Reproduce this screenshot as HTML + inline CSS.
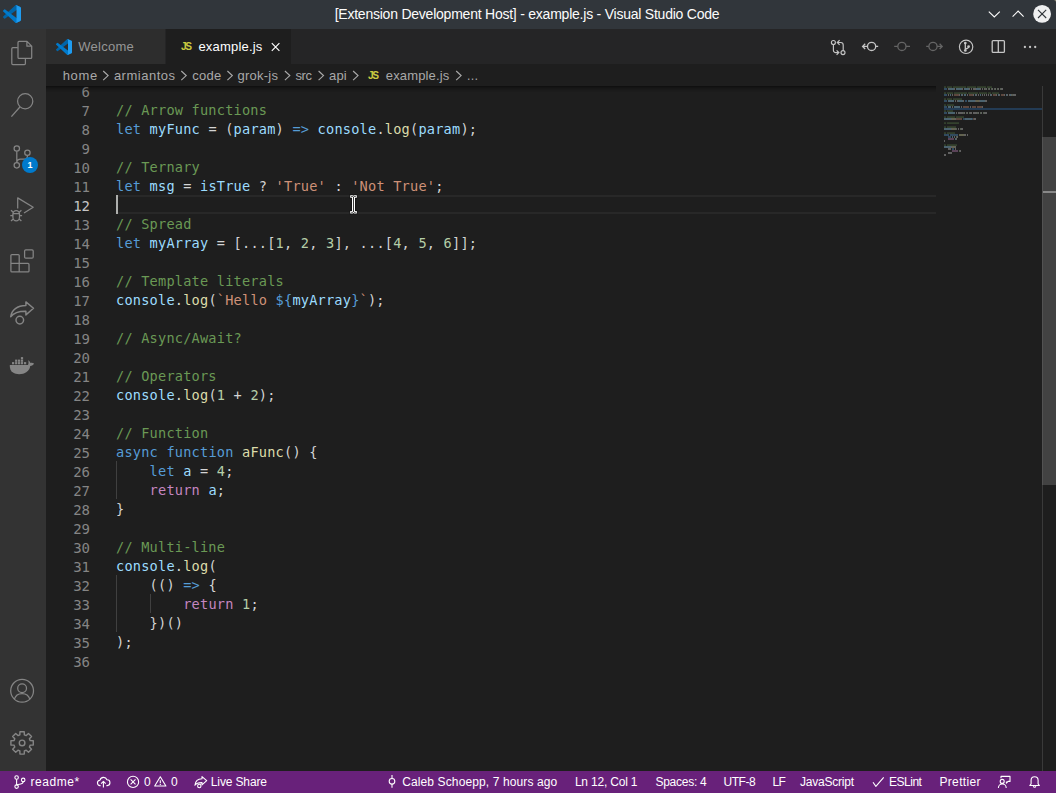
<!DOCTYPE html>
<html lang="en">
<head>
<meta charset="utf-8">
<title>[Extension Development Host] - example.js - Visual Studio Code</title>
<style>
*{box-sizing:border-box;margin:0;padding:0}
html,body{width:1056px;height:793px;overflow:hidden;background:#1e1e1e}
body{position:relative;font-family:"Liberation Sans","DejaVu Sans",sans-serif;font-size:13px;color:#ccc}
.abs{position:absolute}
#titlebar{position:absolute;left:0;top:0;width:1056px;height:29px;background:#31363b}
#titletext{position:absolute;left:-1px;top:0;width:1056px;height:29px;line-height:29px;text-align:center;color:#fcfcfc;font-size:14px;white-space:nowrap}
#activity{position:absolute;left:0;top:29px;width:46px;height:742px;background:#333333}
#tabs{position:absolute;left:46px;top:29px;width:1010px;height:35px;background:#252526}
.tab{position:absolute;top:0;height:35px;line-height:35px;white-space:nowrap;font-size:13px}
#tab1{left:0;width:119px;background:#2d2d2d;color:#969696}
#tab2{left:120px;width:125px;background:#1e1e1e;color:#ffffff}
#crumbs{position:absolute;left:46px;top:64px;width:1010px;height:22px;background:#1e1e1e;line-height:22px;color:#a9a9a9;font-size:13px;white-space:nowrap}
#crumbs span{position:absolute;top:1px}
#editor{position:absolute;left:46px;top:86px;width:1010px;height:685px;background:#1e1e1e;overflow:hidden}
#shadow{position:absolute;left:0;top:0;width:890px;height:6px;box-shadow:#000 0 6px 6px -6px inset}
.ln{position:absolute;left:0;width:44px;text-align:right;height:19px;line-height:19px;color:#858585;font-family:"DejaVu Sans Mono","Liberation Mono",monospace;font-size:14px}
.ln.cur{color:#c6c6c6}
.cl{position:absolute;left:70px;height:19px;line-height:19px;white-space:pre;color:#d4d4d4;font-family:"DejaVu Sans Mono","Liberation Mono",monospace;font-size:13.6px;letter-spacing:0.213px}
.c{color:#6a9955}.k{color:#569cd6}.v{color:#9cdcfe}.f{color:#dcdcaa}.s{color:#ce9178}.n{color:#b5cea8}.r{color:#c586c0}
#status{position:absolute;left:0;top:771px;width:1056px;height:22px;background:#68217a;color:#fff;font-size:12px;line-height:22px;white-space:nowrap}
#status span{position:absolute;top:0}
svg{position:absolute;overflow:visible}
.badge{position:absolute;left:22px;top:157px;width:16px;height:16px;line-height:16px;text-align:center;color:#fff;font-size:9px;font-weight:bold}
.js{position:absolute;color:#cbcb41;font-weight:bold;font-size:10.2px;letter-spacing:-1.3px}
</style>
</head>
<body>
<div id="titlebar"></div>
<div id="titletext" style="letter-spacing:-0.23px">[Extension Development Host] - example.js - Visual Studio Code</div>
<div id="activity"></div>
<div id="tabs">
  <div class="tab" id="tab1"><span class="abs" style="left:32.2px;letter-spacing:0.28px">Welcome</span></div>
  <div class="tab" id="tab2"><span class="js" style="left:15px;top:0">JS</span><span class="abs" style="left:32.4px;letter-spacing:0.20px">example.js</span></div>
</div>
<div id="crumbs">
  <span style="left:16.7px;letter-spacing:0.67px">home</span>
  <span style="left:67.9px;letter-spacing:0.50px">armiantos</span>
  <span style="left:146.2px;letter-spacing:0.28px">code</span>
  <span style="left:191.5px;letter-spacing:0.23px">grok-js</span>
  <span style="left:249.4px;letter-spacing:-0.41px">src</span>
  <span style="left:283.0px;letter-spacing:0.17px">api</span>
  <span style="left:339.8px;letter-spacing:0.15px">example.js</span>
  <span class="js" style="left:322px">JS</span>
  <span style="left:420.5px;font-size:12px">…</span>
</div>
<div id="editor">
<!--CODE-->
  <div class="ln" style="top:-3px">6</div>
  <div class="ln" style="top:16px">7</div>
  <div class="cl" style="top:15px"><span class="c">// Arrow functions</span></div>
  <div class="ln" style="top:35px">8</div>
  <div class="cl" style="top:34px"><span class="k">let</span> <span class="v">myFunc</span> = (<span class="v">param</span>) <span class="k">=&gt;</span> <span class="v">console</span>.<span class="f">log</span>(<span class="v">param</span>);</div>
  <div class="ln" style="top:54px">9</div>
  <div class="ln" style="top:73px">10</div>
  <div class="cl" style="top:72px"><span class="c">// Ternary</span></div>
  <div class="ln" style="top:92px">11</div>
  <div class="cl" style="top:91px"><span class="k">let</span> <span class="v">msg</span> = <span class="v">isTrue</span> ? <span class="s">'True'</span> : <span class="s">'Not True'</span>;</div>
  <div class="ln cur" style="top:111px">12</div>
  <div class="ln" style="top:130px">13</div>
  <div class="cl" style="top:129px"><span class="c">// Spread</span></div>
  <div class="ln" style="top:149px">14</div>
  <div class="cl" style="top:148px"><span class="k">let</span> <span class="v">myArray</span> = [...[<span class="n">1</span>, <span class="n">2</span>, <span class="n">3</span>], ...[<span class="n">4</span>, <span class="n">5</span>, <span class="n">6</span>]];</div>
  <div class="ln" style="top:168px">15</div>
  <div class="ln" style="top:187px">16</div>
  <div class="cl" style="top:186px"><span class="c">// Template literals</span></div>
  <div class="ln" style="top:206px">17</div>
  <div class="cl" style="top:205px"><span class="v">console</span>.<span class="f">log</span>(<span class="s">`Hello </span><span class="k">${</span><span class="v">myArray</span><span class="k">}</span><span class="s">`</span>);</div>
  <div class="ln" style="top:225px">18</div>
  <div class="ln" style="top:244px">19</div>
  <div class="cl" style="top:243px"><span class="c">// Async/Await?</span></div>
  <div class="ln" style="top:263px">20</div>
  <div class="ln" style="top:282px">21</div>
  <div class="cl" style="top:281px"><span class="c">// Operators</span></div>
  <div class="ln" style="top:301px">22</div>
  <div class="cl" style="top:300px"><span class="v">console</span>.<span class="f">log</span>(<span class="n">1</span> + <span class="n">2</span>);</div>
  <div class="ln" style="top:320px">23</div>
  <div class="ln" style="top:339px">24</div>
  <div class="cl" style="top:338px"><span class="c">// Function</span></div>
  <div class="ln" style="top:358px">25</div>
  <div class="cl" style="top:357px"><span class="k">async</span> <span class="k">function</span> <span class="f">aFunc</span>() {</div>
  <div class="ln" style="top:377px">26</div>
  <div class="cl" style="top:376px">    <span class="k">let</span> <span class="v">a</span> = <span class="n">4</span>;</div>
  <div class="ln" style="top:396px">27</div>
  <div class="cl" style="top:395px">    <span class="r">return</span> <span class="v">a</span>;</div>
  <div class="ln" style="top:415px">28</div>
  <div class="cl" style="top:414px">}</div>
  <div class="ln" style="top:434px">29</div>
  <div class="ln" style="top:453px">30</div>
  <div class="cl" style="top:452px"><span class="c">// Multi-line</span></div>
  <div class="ln" style="top:472px">31</div>
  <div class="cl" style="top:471px"><span class="v">console</span>.<span class="f">log</span>(</div>
  <div class="ln" style="top:491px">32</div>
  <div class="cl" style="top:490px">    (() <span class="k">=&gt;</span> {</div>
  <div class="ln" style="top:510px">33</div>
  <div class="cl" style="top:509px">        <span class="r">return</span> <span class="n">1</span>;</div>
  <div class="ln" style="top:529px">34</div>
  <div class="cl" style="top:528px">    })()</div>
  <div class="ln" style="top:548px">35</div>
  <div class="cl" style="top:547px">);</div>
  <div class="ln" style="top:567px">36</div>
<!--/CODE-->
  <div id="shadow"></div>
</div>
<div id="status">
  <span style="left:30.5px;letter-spacing:0.57px">readme*</span>
  <span style="left:143.9px;letter-spacing:0.00px">0</span>
  <span style="left:171.0px;letter-spacing:0.00px">0</span>
  <span style="left:210.8px;letter-spacing:-0.13px">Live Share</span>
  <span style="left:402.2px;letter-spacing:0.12px">Caleb Schoepp, 7 hours ago</span>
  <span style="left:574.9px;letter-spacing:-0.19px">Ln 12, Col 1</span>
  <span style="left:655.4px;letter-spacing:-0.25px">Spaces: 4</span>
  <span style="left:723.5px;letter-spacing:-0.48px">UTF-8</span>
  <span style="left:772.6px;letter-spacing:-0.70px">LF</span>
  <span style="left:799.9px;letter-spacing:-0.20px">JavaScript</span>
  <span style="left:889.0px;letter-spacing:-0.48px">ESLint</span>
  <span style="left:939.4px;letter-spacing:0.36px">Prettier</span>
</div>
<!--SVG-->
<svg id="ov" width="1056" height="793" viewBox="0 0 1056 793" style="left:0;top:0;pointer-events:none">
<g transform="translate(3 5) scale(0.18)">
<path fill="#0065a9" d="M96.46 10.8L75.86.88a6.23 6.23 0 0 0-7.1 1.2L1.3 63.55a4.17 4.17 0 0 0 0 6.16l5.5 5a4.17 4.17 0 0 0 5.33.24l81.22-61.6c2.72-2.07 6.64-.13 6.64 3.3v-.24a6.25 6.25 0 0 0-3.54-5.63z"/>
<path fill="#007acc" d="M96.46 89.2l-20.6 9.92a6.23 6.23 0 0 1-7.1-1.2L1.3 36.45a4.17 4.17 0 0 1 0-6.16l5.5-5a4.17 4.17 0 0 1 5.33-.24l81.22 61.6c2.72 2.07 6.64.13 6.64-3.3v.24a6.25 6.25 0 0 1-3.54 5.63z"/>
<path fill="#1f9cf0" d="M75.86 99.13a6.23 6.23 0 0 1-7.1-1.2c2.3 2.3 6.25.67 6.25-2.6V4.67c0-3.26-3.95-4.9-6.25-2.6a6.23 6.23 0 0 1 7.1-1.2l20.6 9.9A6.25 6.25 0 0 1 100 16.4v67.2a6.25 6.25 0 0 1-3.54 5.63z"/>
</g>
<g transform="translate(56 39) scale(0.16)">
<path fill="#0065a9" d="M96.46 10.8L75.86.88a6.23 6.23 0 0 0-7.1 1.2L1.3 63.55a4.17 4.17 0 0 0 0 6.16l5.5 5a4.17 4.17 0 0 0 5.33.24l81.22-61.6c2.72-2.07 6.64-.13 6.64 3.3v-.24a6.25 6.25 0 0 0-3.54-5.63z"/>
<path fill="#007acc" d="M96.46 89.2l-20.6 9.92a6.23 6.23 0 0 1-7.1-1.2L1.3 36.45a4.17 4.17 0 0 1 0-6.16l5.5-5a4.17 4.17 0 0 1 5.33-.24l81.22 61.6c2.72 2.07 6.64.13 6.64-3.3v.24a6.25 6.25 0 0 1-3.54 5.63z"/>
<path fill="#1f9cf0" d="M75.86 99.13a6.23 6.23 0 0 1-7.1-1.2c2.3 2.3 6.25.67 6.25-2.6V4.67c0-3.26-3.95-4.9-6.25-2.6a6.23 6.23 0 0 1 7.1-1.2l20.6 9.9A6.25 6.25 0 0 1 100 16.4v67.2a6.25 6.25 0 0 1-3.54 5.63z"/>
</g>
<path d="M988.8 11.6 L994.3 17 L999.8 11.6" fill="none" stroke="#fcfcfc" stroke-width="1.1"/>
<path d="M1012.6 16.6 L1018.1 11.1 L1023.6 16.6" fill="none" stroke="#fcfcfc" stroke-width="1.1"/>
<circle cx="1042.1" cy="13.9" r="8.9" fill="#eff0f1"/>
<path d="M1038 9.8 L1046.2 18 M1046.2 9.8 L1038 18" fill="none" stroke="#31363b" stroke-width="1.1"/>
<path d="M1053.5 0 H1056 V2.5 A2.5 2.5 0 0 0 1053.5 0Z" fill="#9a957f"/>
<g fill="none" stroke="#858585" stroke-width="1.25" stroke-linejoin="round">
<path d="M18 42.4 a1 1 0 0 1 1 -1 h8 l4.7 4.7 v11.3 a1 1 0 0 1 -1 1 h-11.7 a1 1 0 0 1 -1 -1 z M26.9 41.6 v4.6 h4.6"/>
<path d="M17.8 47.7 h-5 a1 1 0 0 0 -1 1 v14.9 a1 1 0 0 0 1 1 h11.6 a1 1 0 0 0 1 -1 v-5"/>
<circle cx="25.2" cy="101.3" r="7.6"/><path d="M19.9 107 L11.4 116.6"/>
<circle cx="16.8" cy="148.5" r="2.7"/><circle cx="16.8" cy="165.3" r="2.7"/><circle cx="27.4" cy="152.7" r="2.7"/>
<path d="M16.8 151.2 V162.6 M27.4 155.4 v0.6 a3.2 3.2 0 0 1 -3.2 3.2 h-3.6 a3.8 3.8 0 0 0 -3.8 3.4"/>
<path d="M17.7 208.6 V197.9 L33.2 207.3 L24 213"/>
<path d="M12.9 214.2 a3.3 3.6 0 0 1 6.6 0 v3 a3.3 3.6 0 0 1 -6.6 0 z M12.9 213.6 h6.6 M12.9 215.7 h-2.6 M19.5 215.7 h2.6 M13.2 212.2 l-2.2 -2 M19.2 212.2 l2.2 -2 M13.3 218.9 l-2.3 2 M19.1 218.9 l2.3 2" stroke-width="1.3"/>
<path d="M10.9 255.5 a1 1 0 0 1 1 -1 h6.3 a1 1 0 0 1 1 1 v7.9 h8.8 a1 1 0 0 1 1 1 v6.5 a1 1 0 0 1 -1 1 h-16.1 a1 1 0 0 1 -1 -1 z M10.9 263.4 h8.3 v8.5"/>
<rect x="24.6" y="249.8" width="8.6" height="8.3" rx="1.2"/>
<path stroke-width="1.45" d="M25.9 301.9 L33.5 308.3 L25.9 314.9 V311.3 C19.5 311.2 14 312.6 10.7 316.8 C11.6 310 17.2 305.5 25.9 305.5 Z"/>
<circle cx="19.8" cy="320.1" r="3.8" stroke-width="1.45"/>
<circle cx="22.1" cy="690.8" r="11.4"/><circle cx="22.1" cy="688.3" r="4.4"/>
<path d="M14.4 699.2 C15.4 695.6 18.4 693.6 22.1 693.6 C25.8 693.6 28.8 695.6 29.8 699.2"/>
<path d="M19.86 734.80 L19.95 731.71 L24.25 731.71 L24.34 734.80 L26.24 735.59 L28.49 733.46 L31.54 736.51 L29.41 738.76 L30.20 740.66 L33.29 740.75 L33.29 745.05 L30.20 745.14 L29.41 747.04 L31.54 749.29 L28.49 752.34 L26.24 750.21 L24.34 751.00 L24.25 754.09 L19.95 754.09 L19.86 751.00 L17.96 750.21 L15.71 752.34 L12.66 749.29 L14.79 747.04 L14.00 745.14 L10.91 745.05 L10.91 740.75 L14.00 740.66 L14.79 738.76 L12.66 736.51 L15.71 733.46 L17.96 735.59 Z" stroke-width="1.4"/>
<circle cx="22.1" cy="742.9" r="2.8" stroke-width="1.4"/>
</g>
<g fill="#858585">
<path d="M9.8 364.9 H30.2 C30.4 367.6 29 370.2 26.6 372 C22.8 374.7 16.5 374.9 13 372.6 C10.6 370.9 9.6 368 9.8 364.9 Z"/>
<path d="M28 364.9 C28.8 363.6 28.6 361.4 28.1 360.2 C29.4 360.6 30.2 361.9 30.4 363 C31.6 362.7 33 362.8 34 363.5 C33.5 365 32 365.9 30.2 366 Z"/>
<rect x="12" y="362.1" width="2.2" height="2.2"/>
<rect x="15.1" y="362.1" width="2.2" height="2.2"/>
<rect x="18" y="362.1" width="2.2" height="2.2"/>
<rect x="20.9" y="362.1" width="2.2" height="2.2"/>
<rect x="24" y="362.1" width="2.2" height="2.2"/>
<rect x="15.1" y="359.6" width="2.2" height="2.2"/>
<rect x="18" y="359.6" width="2.2" height="2.2"/>
<rect x="20.9" y="359.6" width="2.2" height="2.2"/>
<rect x="20.9" y="357.1" width="2.2" height="2.2"/>
</g>
<circle cx="30" cy="165" r="8" fill="#007acc"/>
<!--MORE-->
<rect x="116" y="195" width="820" height="2" fill="#282828"/><rect x="116" y="212" width="820" height="2" fill="#282828"/>
<rect x="116" y="195" width="2" height="19" fill="#aeafad"/>
<rect x="116" y="461" width="1" height="38" fill="#404040"/>
<rect x="116" y="575" width="1" height="57" fill="#404040"/>
<rect x="150" y="594" width="1" height="19" fill="#404040"/>
<path d="M350.2 195.2 h2.6 l0.7 0.5 l0.7 -0.5 h2.6 v2.6 h-1.8 v13.2 h1.8 v2.6 h-2.6 l-0.7 -0.5 l-0.7 0.5 h-2.6 v-2.6 h1.8 v-13.2 h-1.8 z" fill="#fff" stroke="#000" stroke-opacity="0.55" stroke-width="1.2" paint-order="stroke"/>
<path d="M351.3 196.5 h1.4 l0.8 0.7 l0.8 -0.7 h1.4 M351.3 212.3 h1.4 l0.8 -0.7 l0.8 0.7 h1.4 M353.5 197 V211.8" fill="none" stroke="#222" stroke-width="0.9"/>
<path d="M271.8 43.2 L279.4 50.8 M279.4 43.2 L271.8 50.8" fill="none" stroke="#fff" stroke-width="1.15"/>
<path d="M103.2 71 L108.10000000000001 75.6 L103.2 80.2" fill="none" stroke="#a9a9a9" stroke-width="1.15"/>
<path d="M181.3 71 L186.20000000000002 75.6 L181.3 80.2" fill="none" stroke="#a9a9a9" stroke-width="1.15"/>
<path d="M227.4 71 L232.3 75.6 L227.4 80.2" fill="none" stroke="#a9a9a9" stroke-width="1.15"/>
<path d="M284.9 71 L289.79999999999995 75.6 L284.9 80.2" fill="none" stroke="#a9a9a9" stroke-width="1.15"/>
<path d="M318.6 71 L323.5 75.6 L318.6 80.2" fill="none" stroke="#a9a9a9" stroke-width="1.15"/>
<path d="M353.1 71 L358.0 75.6 L353.1 80.2" fill="none" stroke="#a9a9a9" stroke-width="1.15"/>
<path d="M456.2 71 L461.09999999999997 75.6 L456.2 80.2" fill="none" stroke="#a9a9a9" stroke-width="1.15"/>
<g fill="none" stroke="#c5c5c5" stroke-width="1.3">
<g stroke-width="1.15"><circle cx="833.4" cy="42.5" r="2"/><circle cx="843" cy="52.6" r="2"/>
<path d="M833.4 44.5 V50.2 a2.4 2.4 0 0 0 2.4 2.4 h2.8 M836.6 50.3 l2.3 2.3 l-2.3 2.3 M843.2 50.6 V44.9 a2.4 2.4 0 0 0 -2.4 -2.4 h-3.4 M839.6 40.2 l-2.3 2.3 l2.3 2.3"/></g>
<circle cx="871.6" cy="46.4" r="4.1"/><path d="M867.5 46.4 H862.6 M865.2 43.8 l-2.6 2.6 l2.6 2.6 M875.7 46.4 H878.2"/>
<circle cx="966.1" cy="46.8" r="6.7" stroke-width="1.15"/>
<path d="M965.3 43 V50.4 M968.6 47 c0 1.2 -1.4 1.6 -3.3 2" stroke-width="1.3"/>
<rect x="992.2" y="40.6" width="12.2" height="11.8" rx="1"/><path d="M998.3 40.6 V52.4"/>
</g>
<g fill="#c5c5c5"><circle cx="965.3" cy="43" r="1.35"/><circle cx="965.3" cy="50.5" r="1.35"/><circle cx="968.6" cy="46.6" r="1.35"/>
<circle cx="1024.9" cy="47" r="1.15"/><circle cx="1030.05" cy="47" r="1.15"/><circle cx="1035.2" cy="47" r="1.15"/></g>
<g fill="none" stroke="#656565" stroke-width="1.3">
<circle cx="901.9" cy="46.4" r="4.1"/><path d="M894.2 46.4 H897.8 M906 46.4 H910"/>
<circle cx="933" cy="46.4" r="4.1"/><path d="M926.2 46.4 H928.9 M937.1 46.4 H942.2 M939.6 43.8 l2.6 2.6 l-2.6 2.6"/>
</g>
<rect x="1042" y="86" width="1" height="685" fill="#3a3a3a"/>
<rect x="1043" y="191" width="13" height="2" fill="#939393"/>
<rect x="1042" y="137" width="14" height="348" fill="#797979" fill-opacity="0.4"/>
<rect x="944" y="108" width="98" height="2" fill="#264f78" opacity="0.6"/>
<g opacity="0.36">
<rect x="944" y="86.4" width="2" height="1.4" fill="#6a9955"/>
<rect x="947" y="86.4" width="5" height="1.4" fill="#6a9955"/>
<rect x="953" y="86.4" width="13" height="1.4" fill="#6a9955"/>
<rect x="967" y="86.4" width="9" height="1.4" fill="#6a9955"/>
<rect x="977" y="86.4" width="9" height="1.4" fill="#6a9955"/>
<rect x="987" y="86.4" width="5" height="1.4" fill="#6a9955"/>
<rect x="944" y="88" width="3" height="2" fill="#569cd6"/>
<rect x="948" y="88" width="1" height="2" fill="#d4d4d4"/>
<rect x="949" y="88" width="5" height="2" fill="#9cdcfe"/>
<rect x="954" y="88" width="1" height="2" fill="#d4d4d4"/>
<rect x="956" y="88" width="6" height="2" fill="#9cdcfe"/>
<rect x="962" y="88" width="1" height="2" fill="#d4d4d4"/>
<rect x="964" y="88" width="5" height="2" fill="#9cdcfe"/>
<rect x="969" y="88" width="1" height="2" fill="#d4d4d4"/>
<rect x="971" y="88" width="1" height="2" fill="#d4d4d4"/>
<rect x="973" y="88" width="3" height="2" fill="#d4d4d4"/>
<rect x="976" y="88" width="4" height="2" fill="#9cdcfe"/>
<rect x="980" y="88" width="1" height="2" fill="#d4d4d4"/>
<rect x="982" y="88" width="1" height="2" fill="#d4d4d4"/>
<rect x="984" y="88" width="1" height="2" fill="#d4d4d4"/>
<rect x="985" y="88" width="1" height="2" fill="#b5cea8"/>
<rect x="986" y="88" width="1" height="2" fill="#d4d4d4"/>
<rect x="988" y="88" width="1" height="2" fill="#b5cea8"/>
<rect x="989" y="88" width="1" height="2" fill="#d4d4d4"/>
<rect x="991" y="88" width="1" height="2" fill="#b5cea8"/>
<rect x="992" y="88" width="1" height="2" fill="#d4d4d4"/>
<rect x="994" y="88" width="1" height="2" fill="#b5cea8"/>
<rect x="995" y="88" width="1" height="2" fill="#d4d4d4"/>
<rect x="997" y="88" width="1" height="2" fill="#b5cea8"/>
<rect x="998" y="88" width="1" height="2" fill="#d4d4d4"/>
<rect x="1000" y="88" width="1" height="2" fill="#b5cea8"/>
<rect x="1001" y="88" width="2" height="2" fill="#d4d4d4"/>
<rect x="944" y="92.4" width="2" height="1.4" fill="#6a9955"/>
<rect x="947" y="92.4" width="6" height="1.4" fill="#6a9955"/>
<rect x="954" y="92.4" width="13" height="1.4" fill="#6a9955"/>
<rect x="968" y="92.4" width="10" height="1.4" fill="#6a9955"/>
<rect x="979" y="92.4" width="8" height="1.4" fill="#6a9955"/>
<rect x="988" y="92.4" width="3" height="1.4" fill="#6a9955"/>
<rect x="992" y="92.4" width="7" height="1.4" fill="#6a9955"/>
<rect x="944" y="94" width="3" height="2" fill="#569cd6"/>
<rect x="948" y="94" width="1" height="2" fill="#d4d4d4"/>
<rect x="950" y="94" width="1" height="2" fill="#9cdcfe"/>
<rect x="952" y="94" width="1" height="2" fill="#d4d4d4"/>
<rect x="954" y="94" width="5" height="2" fill="#ce9178"/>
<rect x="959" y="94" width="1" height="2" fill="#d4d4d4"/>
<rect x="961" y="94" width="1" height="2" fill="#9cdcfe"/>
<rect x="962" y="94" width="1" height="2" fill="#d4d4d4"/>
<rect x="964" y="94" width="2" height="2" fill="#9cdcfe"/>
<rect x="967" y="94" width="1" height="2" fill="#d4d4d4"/>
<rect x="969" y="94" width="4" height="2" fill="#ce9178"/>
<rect x="973" y="94" width="1" height="2" fill="#d4d4d4"/>
<rect x="975" y="94" width="1" height="2" fill="#9cdcfe"/>
<rect x="976" y="94" width="1" height="2" fill="#d4d4d4"/>
<rect x="978" y="94" width="1" height="2" fill="#d4d4d4"/>
<rect x="980" y="94" width="1" height="2" fill="#9cdcfe"/>
<rect x="982" y="94" width="1" height="2" fill="#d4d4d4"/>
<rect x="984" y="94" width="1" height="2" fill="#d4d4d4"/>
<rect x="986" y="94" width="1" height="2" fill="#d4d4d4"/>
<rect x="988" y="94" width="1" height="2" fill="#d4d4d4"/>
<rect x="990" y="94" width="1" height="2" fill="#9cdcfe"/>
<rect x="991" y="94" width="1" height="2" fill="#d4d4d4"/>
<rect x="993" y="94" width="3" height="2" fill="#ce9178"/>
<rect x="996" y="94" width="1" height="2" fill="#d4d4d4"/>
<rect x="998" y="94" width="1" height="2" fill="#9cdcfe"/>
<rect x="999" y="94" width="1" height="2" fill="#d4d4d4"/>
<rect x="1001" y="94" width="3" height="2" fill="#ce9178"/>
<rect x="1004" y="94" width="1" height="2" fill="#d4d4d4"/>
<rect x="1006" y="94" width="1" height="2" fill="#9cdcfe"/>
<rect x="1007" y="94" width="1" height="2" fill="#d4d4d4"/>
<rect x="1009" y="94" width="1" height="2" fill="#d4d4d4"/>
<rect x="1010" y="94" width="1" height="2" fill="#9cdcfe"/>
<rect x="1011" y="94" width="1" height="2" fill="#d4d4d4"/>
<rect x="1012" y="94" width="1" height="2" fill="#b5cea8"/>
<rect x="1013" y="94" width="3" height="2" fill="#d4d4d4"/>
<rect x="944" y="98.4" width="2" height="1.4" fill="#6a9955"/>
<rect x="947" y="98.4" width="5" height="1.4" fill="#6a9955"/>
<rect x="953" y="98.4" width="9" height="1.4" fill="#6a9955"/>
<rect x="944" y="100" width="3" height="2" fill="#569cd6"/>
<rect x="948" y="100" width="6" height="2" fill="#9cdcfe"/>
<rect x="955" y="100" width="1" height="2" fill="#d4d4d4"/>
<rect x="957" y="100" width="1" height="2" fill="#d4d4d4"/>
<rect x="958" y="100" width="5" height="2" fill="#9cdcfe"/>
<rect x="963" y="100" width="1" height="2" fill="#d4d4d4"/>
<rect x="965" y="100" width="2" height="2" fill="#569cd6"/>
<rect x="968" y="100" width="7" height="2" fill="#9cdcfe"/>
<rect x="975" y="100" width="1" height="2" fill="#d4d4d4"/>
<rect x="976" y="100" width="3" height="2" fill="#dcdcaa"/>
<rect x="979" y="100" width="1" height="2" fill="#d4d4d4"/>
<rect x="980" y="100" width="5" height="2" fill="#9cdcfe"/>
<rect x="985" y="100" width="2" height="2" fill="#d4d4d4"/>
<rect x="944" y="104.4" width="2" height="1.4" fill="#6a9955"/>
<rect x="947" y="104.4" width="7" height="1.4" fill="#6a9955"/>
<rect x="944" y="106" width="3" height="2" fill="#569cd6"/>
<rect x="948" y="106" width="3" height="2" fill="#9cdcfe"/>
<rect x="952" y="106" width="1" height="2" fill="#d4d4d4"/>
<rect x="954" y="106" width="6" height="2" fill="#9cdcfe"/>
<rect x="961" y="106" width="1" height="2" fill="#d4d4d4"/>
<rect x="963" y="106" width="6" height="2" fill="#ce9178"/>
<rect x="970" y="106" width="1" height="2" fill="#d4d4d4"/>
<rect x="972" y="106" width="4" height="2" fill="#ce9178"/>
<rect x="977" y="106" width="5" height="2" fill="#ce9178"/>
<rect x="982" y="106" width="1" height="2" fill="#d4d4d4"/>
<rect x="944" y="110.4" width="2" height="1.4" fill="#6a9955"/>
<rect x="947" y="110.4" width="6" height="1.4" fill="#6a9955"/>
<rect x="944" y="112" width="3" height="2" fill="#569cd6"/>
<rect x="948" y="112" width="7" height="2" fill="#9cdcfe"/>
<rect x="956" y="112" width="1" height="2" fill="#d4d4d4"/>
<rect x="958" y="112" width="5" height="2" fill="#d4d4d4"/>
<rect x="963" y="112" width="1" height="2" fill="#b5cea8"/>
<rect x="964" y="112" width="1" height="2" fill="#d4d4d4"/>
<rect x="966" y="112" width="1" height="2" fill="#b5cea8"/>
<rect x="967" y="112" width="1" height="2" fill="#d4d4d4"/>
<rect x="969" y="112" width="1" height="2" fill="#b5cea8"/>
<rect x="970" y="112" width="2" height="2" fill="#d4d4d4"/>
<rect x="973" y="112" width="4" height="2" fill="#d4d4d4"/>
<rect x="977" y="112" width="1" height="2" fill="#b5cea8"/>
<rect x="978" y="112" width="1" height="2" fill="#d4d4d4"/>
<rect x="980" y="112" width="1" height="2" fill="#b5cea8"/>
<rect x="981" y="112" width="1" height="2" fill="#d4d4d4"/>
<rect x="983" y="112" width="1" height="2" fill="#b5cea8"/>
<rect x="984" y="112" width="3" height="2" fill="#d4d4d4"/>
<rect x="944" y="116.4" width="2" height="1.4" fill="#6a9955"/>
<rect x="947" y="116.4" width="8" height="1.4" fill="#6a9955"/>
<rect x="956" y="116.4" width="8" height="1.4" fill="#6a9955"/>
<rect x="944" y="118" width="7" height="2" fill="#9cdcfe"/>
<rect x="951" y="118" width="1" height="2" fill="#d4d4d4"/>
<rect x="952" y="118" width="3" height="2" fill="#dcdcaa"/>
<rect x="955" y="118" width="1" height="2" fill="#d4d4d4"/>
<rect x="956" y="118" width="6" height="2" fill="#ce9178"/>
<rect x="963" y="118" width="2" height="2" fill="#569cd6"/>
<rect x="965" y="118" width="7" height="2" fill="#9cdcfe"/>
<rect x="972" y="118" width="1" height="2" fill="#569cd6"/>
<rect x="973" y="118" width="1" height="2" fill="#ce9178"/>
<rect x="974" y="118" width="2" height="2" fill="#d4d4d4"/>
<rect x="944" y="122.4" width="2" height="1.4" fill="#6a9955"/>
<rect x="947" y="122.4" width="12" height="1.4" fill="#6a9955"/>
<rect x="944" y="126.4" width="2" height="1.4" fill="#6a9955"/>
<rect x="947" y="126.4" width="9" height="1.4" fill="#6a9955"/>
<rect x="944" y="128" width="7" height="2" fill="#9cdcfe"/>
<rect x="951" y="128" width="1" height="2" fill="#d4d4d4"/>
<rect x="952" y="128" width="3" height="2" fill="#dcdcaa"/>
<rect x="955" y="128" width="1" height="2" fill="#d4d4d4"/>
<rect x="956" y="128" width="1" height="2" fill="#b5cea8"/>
<rect x="958" y="128" width="1" height="2" fill="#d4d4d4"/>
<rect x="960" y="128" width="1" height="2" fill="#b5cea8"/>
<rect x="961" y="128" width="2" height="2" fill="#d4d4d4"/>
<rect x="944" y="132.4" width="2" height="1.4" fill="#6a9955"/>
<rect x="947" y="132.4" width="8" height="1.4" fill="#6a9955"/>
<rect x="944" y="134" width="5" height="2" fill="#569cd6"/>
<rect x="950" y="134" width="8" height="2" fill="#569cd6"/>
<rect x="959" y="134" width="5" height="2" fill="#dcdcaa"/>
<rect x="964" y="134" width="2" height="2" fill="#d4d4d4"/>
<rect x="967" y="134" width="1" height="2" fill="#d4d4d4"/>
<rect x="948" y="136" width="3" height="2" fill="#569cd6"/>
<rect x="952" y="136" width="1" height="2" fill="#9cdcfe"/>
<rect x="954" y="136" width="1" height="2" fill="#d4d4d4"/>
<rect x="956" y="136" width="1" height="2" fill="#b5cea8"/>
<rect x="957" y="136" width="1" height="2" fill="#d4d4d4"/>
<rect x="948" y="138" width="6" height="2" fill="#c586c0"/>
<rect x="955" y="138" width="1" height="2" fill="#9cdcfe"/>
<rect x="956" y="138" width="1" height="2" fill="#d4d4d4"/>
<rect x="944" y="140" width="1" height="2" fill="#d4d4d4"/>
<rect x="944" y="144.4" width="2" height="1.4" fill="#6a9955"/>
<rect x="947" y="144.4" width="10" height="1.4" fill="#6a9955"/>
<rect x="944" y="146" width="7" height="2" fill="#9cdcfe"/>
<rect x="951" y="146" width="1" height="2" fill="#d4d4d4"/>
<rect x="952" y="146" width="3" height="2" fill="#dcdcaa"/>
<rect x="955" y="146" width="1" height="2" fill="#d4d4d4"/>
<rect x="948" y="148" width="3" height="2" fill="#d4d4d4"/>
<rect x="952" y="148" width="2" height="2" fill="#569cd6"/>
<rect x="955" y="148" width="1" height="2" fill="#d4d4d4"/>
<rect x="952" y="150" width="6" height="2" fill="#c586c0"/>
<rect x="959" y="150" width="1" height="2" fill="#b5cea8"/>
<rect x="960" y="150" width="1" height="2" fill="#d4d4d4"/>
<rect x="948" y="152" width="4" height="2" fill="#d4d4d4"/>
<rect x="944" y="154" width="2" height="2" fill="#d4d4d4"/>
</g>
<g fill="none" stroke="#fff" stroke-width="1.1" stroke-linejoin="round">
<circle cx="16.6" cy="777.5" r="1.75"/><circle cx="16.6" cy="786.6" r="1.75"/><circle cx="23.2" cy="779.9" r="1.75"/>
<path d="M16.6 779.3 V784.8 M23.2 781.7 c0 2.2 -2.4 2.3 -4 2.6 c-1.2 0.2 -2.2 0.5 -2.6 1"/>
<path d="M100.6 785.6 h-0.3 a2.7 2.7 0 0 1 -0.3 -5.4 a3.6 3.6 0 0 1 6.9 -0.4 a2.9 2.9 0 0 1 0.3 5.8 h-0.8"/>
<path d="M103.4 787.6 V781.4 M101.1 783.6 l2.3 -2.3 l2.3 2.3"/>
<circle cx="133.05" cy="781.9" r="5.6"/><path d="M130.6 779.45 L135.5 784.35 M135.5 779.45 L130.6 784.35"/>
<path d="M160.3 776.8 L165.9 786 H154.7 Z M160.3 780.2 V783.2 M160.3 784 V785"/>
<path d="M202 776.6 L206.7 780.7 L202 784.8 V782.6 C198.6 782.5 196.4 783.2 194.9 785.2 C195.4 781.2 198 778.9 202 778.8 Z"/>
<circle cx="199.3" cy="786" r="1.7"/>
<circle cx="392" cy="781.3" r="2.8"/><path d="M392 775 V778.5 M392 784.1 V787.7"/>
<path d="M873 782.3 L875.9 786.4 L883.7 777.4"/>
<path d="M1001 778.2 V776.4 H1010 V781.4 H1008 L1006.4 783.2 V781.4"/>
<circle cx="1002.2" cy="781.4" r="2"/><path d="M998.4 787.9 a3.9 3.9 0 0 1 7.8 0"/>
<path d="M1029.8 785.5 h9.6 l-1.3 -1.7 v-3.6 a3.5 3.5 0 0 0 -7 0 v3.6 z M1033.3 786.3 a1.4 1.4 0 0 0 2.6 0"/>
</g>
</svg>
<!--/SVG-->
<div class="badge">1</div>
</body>
</html>
